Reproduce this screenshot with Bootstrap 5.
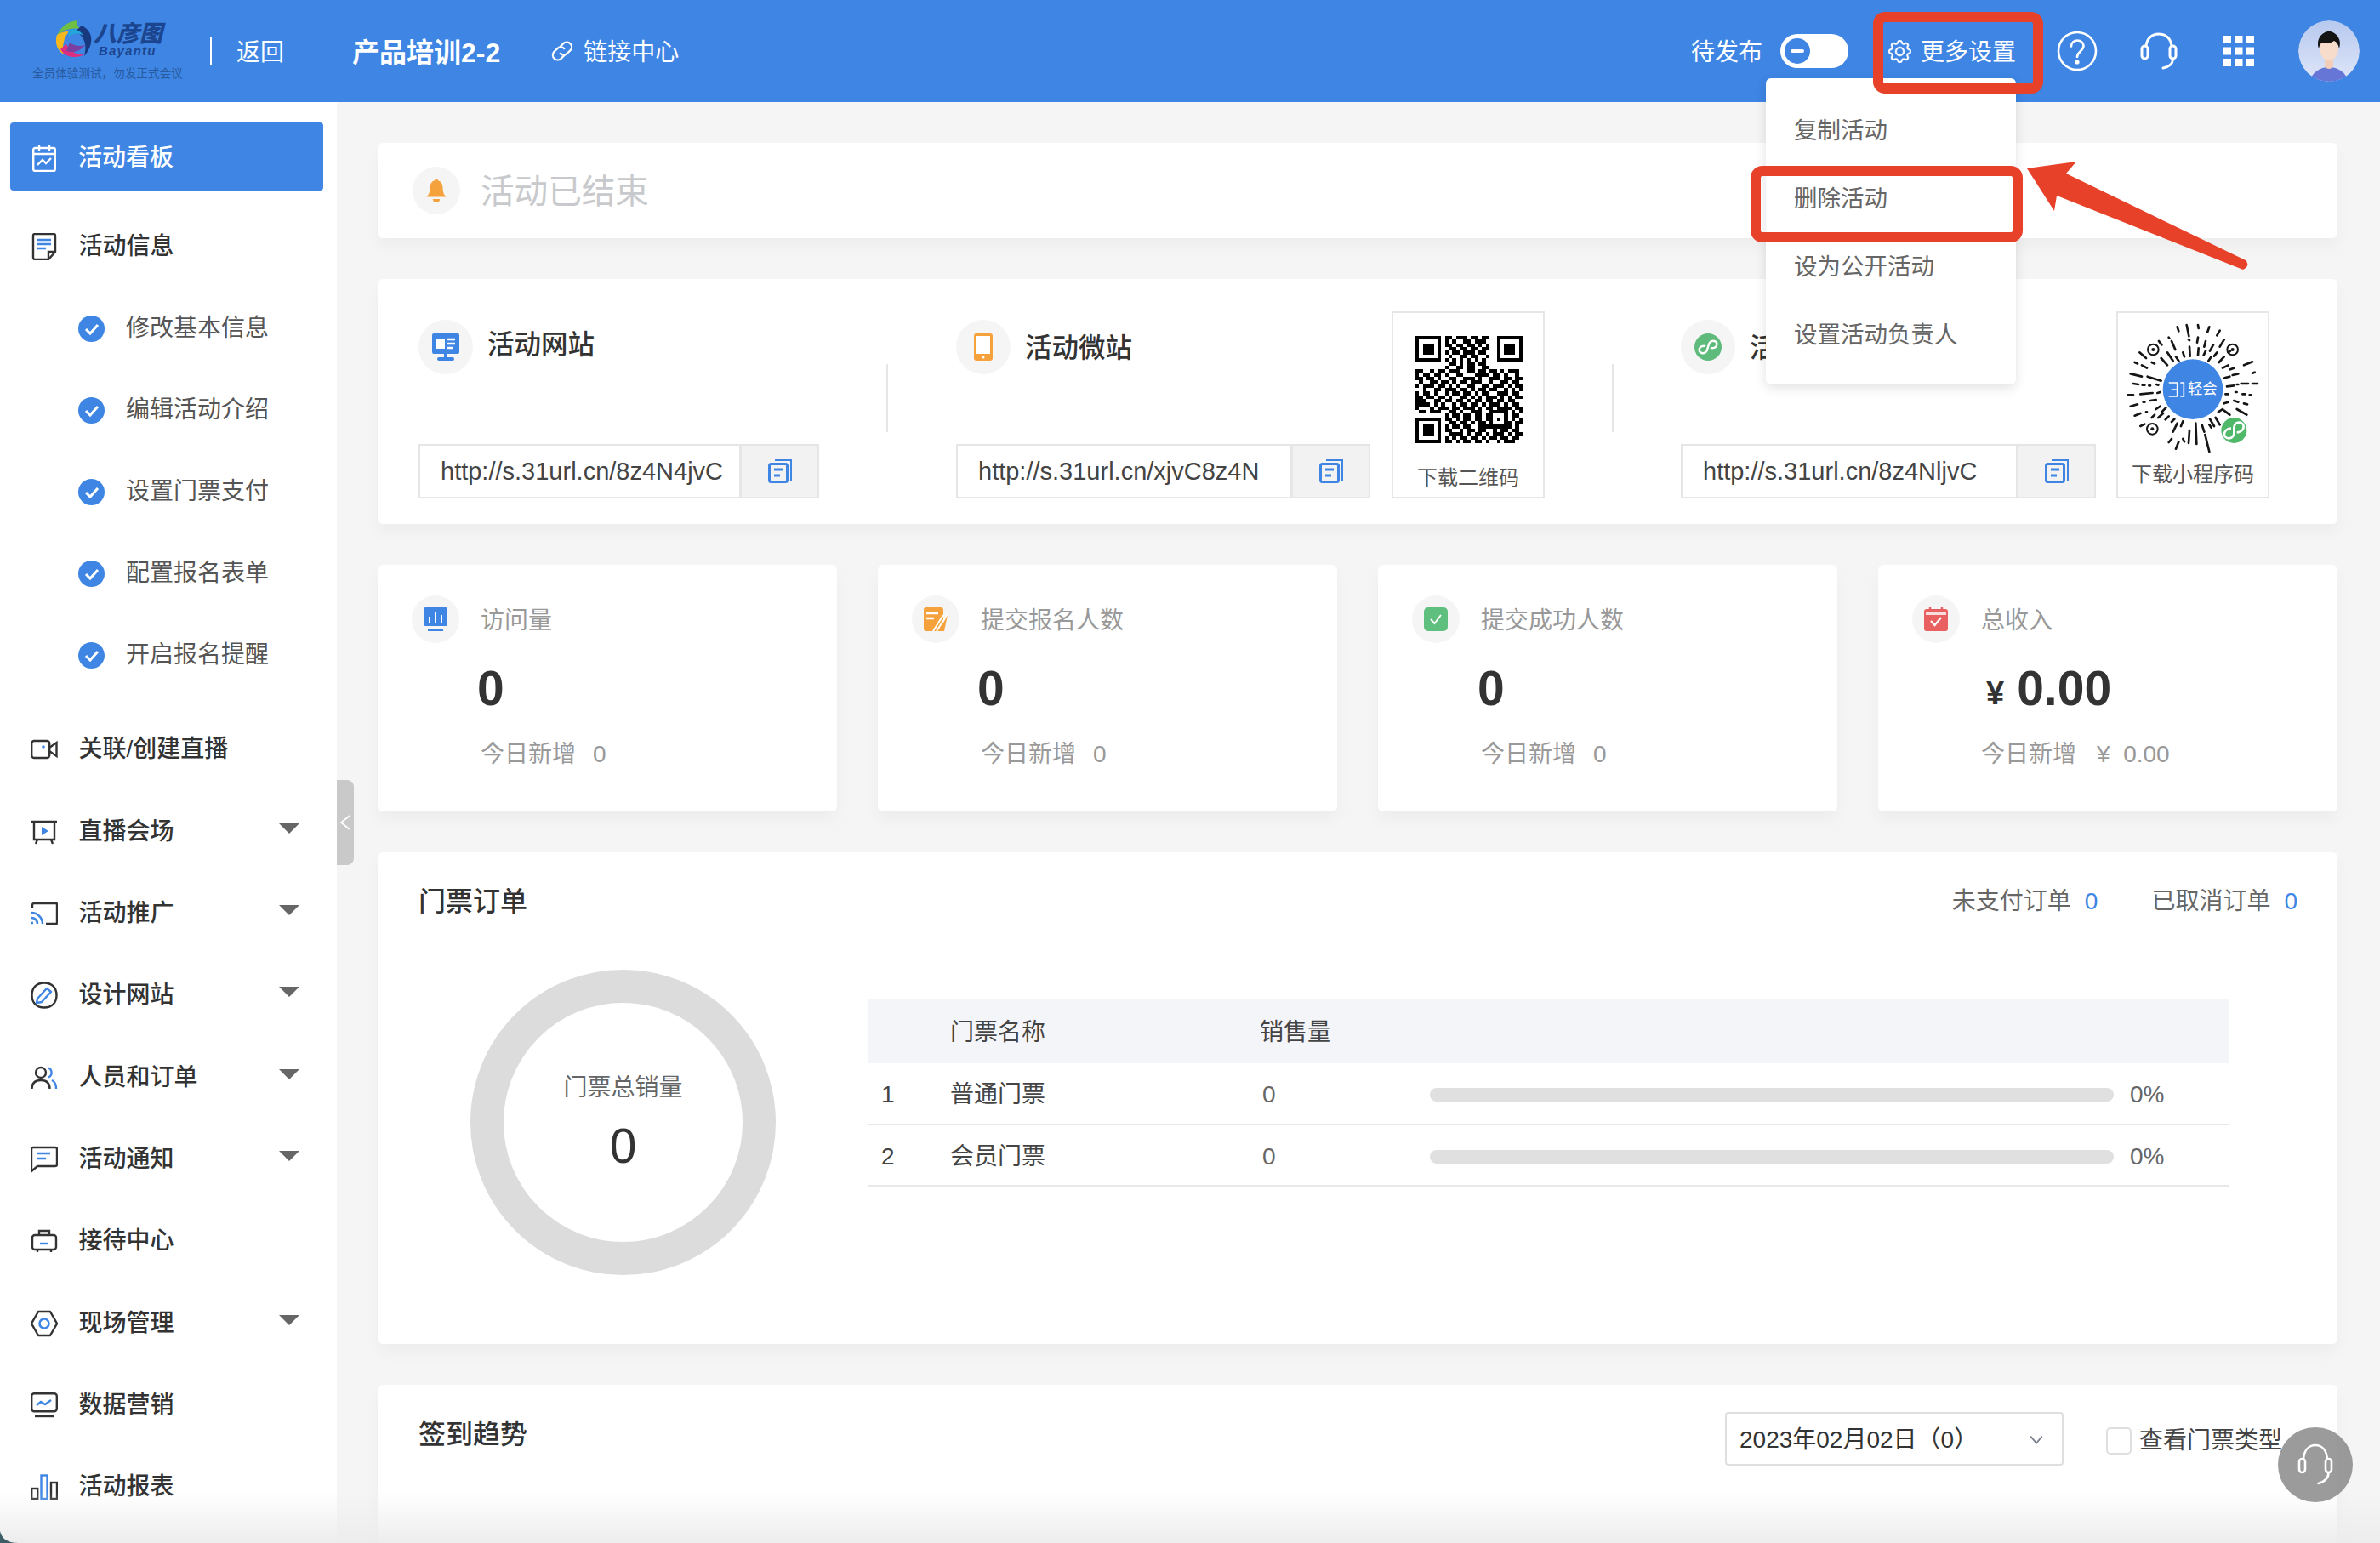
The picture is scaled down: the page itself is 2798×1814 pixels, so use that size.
<!DOCTYPE html>
<html lang="zh-CN">
<head>
<meta charset="utf-8">
<title>活动看板</title>
<link rel="stylesheet" href="https://cdn.jsdelivr.net/npm/bootstrap@5.3.0/dist/css/bootstrap.min.css">
<style>
html,body{margin:0;height:1814px;width:2798px;overflow:hidden}
body{font-family:"Liberation Sans","Noto Sans CJK SC",sans-serif;font-size:28px;color:#333;background:#f5f5f5}
.shell{position:relative;width:2798px;height:1814px;overflow:hidden}
.topbar{height:120px;background:#3e85e4;color:#fff;padding:0 24px 0 0;flex-wrap:nowrap;justify-content:flex-start}
.tx{padding-top:3px}
.logo-col{margin-left:38px;width:177px;line-height:1}
.logo-top{margin-left:28px;height:44px;width:125px}
.logo-txt{margin-left:-2px;font-style:italic;line-height:1}
.logo-cn{font-size:27px;font-weight:900;color:#1c4590;letter-spacing:0;line-height:26px;margin-top:3px}
.logo-en{font-size:15px;font-weight:700;color:#1c4590;letter-spacing:1.2px;margin-left:6px;line-height:14px}
.logo-cap{font-size:13.6px;color:#275a9f;margin-top:10px;white-space:nowrap;line-height:18px}
.bar-div{width:2px;height:32px;background:#fff;margin-left:32px;margin-right:29px}
.bar-title{font-size:32px;font-weight:700;margin-left:80px;white-space:nowrap}
.bar-link{margin-left:58px;gap:10px}
.bar-right{margin-left:auto}
.pill{width:80px;height:40px;background:#fff;border-radius:20px;margin:0 47px 0 21px;padding:2px}
.pill-dot{width:36px;height:36px;border-radius:50%;background:#3e85e4;border:3px solid #fff;box-shadow:0 0 0 1px #3e85e4 inset}
.pill-dash{width:16px;height:4px;background:#fff;border-radius:2px}
.gear-wrap{gap:11px;margin-right:48px}
.ic-q{margin-right:50px}.ic-h{margin-right:54px}.ic-g{margin-right:52px}
.ava{width:72px;height:72px;border-radius:50%;display:block}
.side{width:396px;flex:none;background:#fff;padding-top:24px}
.side-item{height:96.3px;padding:6px 0 0 36px;gap:24.5px;font-weight:500;color:#333;white-space:nowrap;text-decoration:none}
.side-item.is-on{height:80px;margin:0 16px 15px 12px;padding:3px 0 0 26px;gap:26px;background:#3e85e4;color:#fff;border-radius:4px}
.side-sub{height:96px;padding:6px 0 0 92px;gap:25px;color:#555;white-space:nowrap}
.side-gap{margin-top:15px}
.caret-d{width:0;height:0;border-left:12px solid transparent;border-right:12px solid transparent;border-top:12px solid #666;position:absolute;left:328px;margin-top:-8px}
.side-handle{position:absolute;left:396px;top:917px;width:20px;height:100px;background:#c9c9c9;border-radius:0 8px 8px 0;color:#fff}
.main{flex:1;padding:48px 50px 0 48px;gap:48px;min-width:0}
.pane{border:0;border-radius:6px;background:#fff;box-shadow:0 10px 18px rgba(0,0,0,.035)}
.bell-pane{height:112px;padding-left:41px;gap:24px;flex-direction:row;align-items:center}
.bell-txt{font-size:39.6px;color:#c8c9cc;padding-top:4px}
.dot56{width:56px;height:56px;border-radius:50%;background:#f5f5f5;flex:none}
.dot64{width:64px;height:64px;border-radius:50%;background:#f5f5f5;flex:none}
.links-pane{height:288px;padding:38px 0 30px 48px;flex-direction:row}
.lk-col{height:220px}
.lk-head{margin-top:10px;gap:17px;height:64px;font-size:31.5px;font-weight:500;white-space:nowrap}
.lk-head span{margin-top:-4px}
.lk-head.b2 span{margin-top:3px}
.lk-clip{width:20px;overflow:hidden}
.lk-sep{width:2px;height:80px;background:#e6e6e6;margin-top:62px;flex:none}
.lk-inp{margin-top:auto;height:64px;flex-wrap:nowrap}
.lk-inp .form-control{border:2px solid #e6e6e6;border-radius:0;height:64px;font-size:29px;color:#444;padding:0 0 0 24px;line-height:60px;white-space:nowrap;overflow:hidden}
.lk-inp .input-group-text{border:2px solid #e6e6e6;border-radius:0;background:#f2f2f2;width:93px;justify-content:center;padding:0}
.code-box{width:180px;height:220px;border:2px solid #e6e6e6;background:#fff;flex:none;margin-left:24px;text-align:center;font-size:24px;color:#555;white-space:nowrap}
.stat-row{--bs-gutter-x:48px;--bs-gutter-y:0}
.stat-pane{height:290px;padding:36px 0 0 40px}
.stat-head{gap:25px;color:#999;height:56px}
.stat-val{font-size:57px;font-weight:700;line-height:70px;margin:18px 0 0 77px;color:#333;white-space:nowrap}
.stat-val .yen{font-size:38px;margin:0 15px 0 10px;line-height:58px}
.stat-new{color:#999;margin:23px 0 0 81px;line-height:40px;white-space:nowrap;gap:20px}
.stat-new .yen-gap{margin-left:4px}
.order-pane{height:578px}
.sec-head{padding:38px 47px 0 48px;height:77px}
.sec-title{font-size:32px;font-weight:500;line-height:40px}
.sec-meta{color:#666;gap:63px;line-height:40px}
.blue-num{color:#3e85e4;margin-left:16px}
.order-body{flex:1}
.donut{width:359px;height:359px;border:39px solid #dcdcdc;border-radius:50%;margin:61px 0 0 109px;flex:none;padding-top:4px}
.donut-lbl{color:#666;line-height:34px}
.donut-num{font-size:57px;font-weight:500;line-height:70px;margin-top:16px;color:#333}
.tk-wrap{width:1600px;margin:95px 0 0 109px;flex:none}
.tk-table{table-layout:fixed;width:1600px;margin:0;--bs-table-bg:transparent;font-size:28px}
.tk-table th{background:#f4f5f9;font-weight:400;height:76px;padding:4px 0 0;vertical-align:middle;border:0;color:#444}
.tk-table td{height:72px;padding:3px 0 0;vertical-align:middle;border-bottom:2px solid #e8e8e8;color:#444}
.tk-table .tk-idx{padding-left:15px}
.tk-table .tk-num{color:#666;padding-left:3px}
.tk-bar{width:804px;height:16px;background:#e0e0e0;border-radius:8px;--bs-progress-bar-bg:#3e85e4}
.tk-pct{margin-left:19px;color:#666}
.sign-pane{flex:1;min-height:240px;padding:32px 65px 0 48px;flex-direction:row;align-items:flex-start;margin-bottom:-60px}
.sign-title{font-size:32px;font-weight:500;line-height:40px;margin-top:6px}
.sign-sel{width:398px;height:63px;border:2px solid #dfdfdf;border-radius:4px;font-size:28px;color:#333;padding:1px 0 0 15px;line-height:59px;background-image:url("data:image/svg+xml,%3csvg xmlns='http://www.w3.org/2000/svg' viewBox='0 0 16 16'%3e%3cpath fill='none' stroke='%237a7f8c' stroke-width='1.600' d='M2 5l6 7 6-7'/%3e%3c/svg%3e");background-size:18px;background-position:right 21px center;white-space:nowrap}
.sign-chk{gap:9px;margin-left:50px;margin-top:13px;color:#444;white-space:nowrap}
.sign-chk .form-check-input{width:30px;height:32px;margin:0;border:2px solid #dfdfdf;border-radius:5px;float:none}
.float-help{position:absolute;left:2678px;top:1678px;width:88px;height:88px;border-radius:50%;background:rgba(130,130,130,.8)}
.menu-pop{position:absolute;left:2076px;top:92px;width:294px;height:360px;padding:22px 0 18px;margin:0;border:0;border-radius:6px;background:#fff;box-shadow:0 4px 14px rgba(0,0,0,.12);display:block;min-width:0}
.menu-pop .dropdown-item{height:80px;line-height:80px;padding:0 0 0 33px;font-size:27.5px;color:#666}
.note-box{position:absolute;border:12px solid #e8412a;border-radius:14px;pointer-events:none;z-index:1001}
.note-a{left:2202px;top:14px;width:200px;height:96px}
.note-b{left:2058px;top:195px;width:320px;height:90px}
.note-arrow{position:absolute;left:2370px;top:180px;z-index:1001}
.fog{position:absolute;left:0;right:0;bottom:0;height:60px;background:linear-gradient(to bottom,rgba(236,236,236,0),rgba(236,236,236,.95));pointer-events:none}
.corner{position:absolute;left:0;bottom:0}
</style>
</head>
<body>
<div class="shell d-flex flex-column">

<nav class="navbar topbar d-flex align-items-center flex-shrink-0">
  <div class="logo-col">
    <div class="logo-top d-flex align-items-start">
      <svg width="46" height="44" viewBox="0 0 46 44">
        <path d="M25 0C14 1 4 8 1 19C7 12 16 8 28 10C25 7 24 3 25 0Z" fill="#6fbf44"/>
        <path d="M1 17C-2 26 1 35 9 40C7 32 8 22 15 13C9 13 4 15 1 17Z" fill="#f5b91e"/>
        <path d="M5 34C10 43 23 46 33 40C25 41 16 37 12 28C10 29 7 32 5 34Z" fill="#dc2f80"/>
        <path d="M12 36C20 39 29 36 34 29C28 31 21 30 16 26Z" fill="#7a3fa0"/>
        <path d="M30 6C43 12 46 27 33 42C36 31 35 20 23 13C25 10 28 8 30 6Z" fill="#18397f"/>
        <path d="M14 13C20 8 28 11 32 18C26 14 20 15 15 19Z" fill="#22a6dc"/>
      </svg>
      <div class="logo-txt"><div class="logo-cn">八彦图</div><div class="logo-en">Bayantu</div></div>
    </div>
    <div class="logo-cap">全员体验测试，勿发正式会议</div>
  </div>
  <div class="bar-div"></div>
  <span class="tx">返回</span>
  <span class="bar-title tx">产品培训2-2</span>
  <span class="bar-link d-flex align-items-center">
    <svg width="30" height="30" viewBox="0 0 26 26" fill="none" stroke="#fff" stroke-width="1.900" stroke-linecap="round"><path d="M11 8.500l3.600-3.600a5 5 0 0 1 7 7L18 15.500a5 5 0 0 1-7 0"/><path d="M15 17.500l-3.600 3.600a5 5 0 0 1-7-7L8 10.500a5 5 0 0 1 7 0"/></svg>
    <span class="tx">链接中心</span>
  </span>
  <div class="bar-right d-flex align-items-center">
    <span class="tx">待发布</span>
    <div class="pill"><div class="pill-dot d-flex align-items-center justify-content-center"><div class="pill-dash"></div></div></div>
    <div class="gear-wrap d-flex align-items-center">
      <svg width="27" height="27" viewBox="0 0 16 16" fill="#fff" stroke="#fff" stroke-width=".3"><path d="M8 4.754a3.246 3.246 0 1 0 0 6.492 3.246 3.246 0 0 0 0-6.492zM5.754 8a2.246 2.246 0 1 1 4.492 0 2.246 2.246 0 0 1-4.492 0z"/><path d="M9.796 1.343c-.527-1.790-3.065-1.790-3.592 0l-.094.319a.873.873 0 0 1-1.255.52l-.292-.16c-1.640-.892-3.433.902-2.540 2.541l.159.292a.873.873 0 0 1-.52 1.255l-.319.094c-1.790.527-1.790 3.065 0 3.592l.319.094a.873.873 0 0 1 .52 1.255l-.16.292c-.892 1.640.901 3.434 2.541 2.540l.292-.159a.873.873 0 0 1 1.255.52l.094.319c.527 1.790 3.065 1.790 3.592 0l.094-.319a.873.873 0 0 1 1.255-.52l.292.16c1.640.893 3.434-.902 2.540-2.541l-.159-.292a.873.873 0 0 1 .52-1.255l.319-.094c1.790-.527 1.790-3.065 0-3.592l-.319-.094a.873.873 0 0 1-.52-1.255l.16-.292c.893-1.640-.902-3.433-2.541-2.540l-.292.159a.873.873 0 0 1-1.255-.52l-.094-.319zm-2.633.283c.246-.835 1.428-.835 1.674 0l.094.319a1.873 1.873 0 0 0 2.693 1.115l.291-.16c.764-.415 1.600.42 1.184 1.185l-.159.292a1.873 1.873 0 0 0 1.116 2.692l.318.094c.835.246.835 1.428 0 1.674l-.319.094a1.873 1.873 0 0 0-1.115 2.693l.16.291c.415.764-.42 1.600-1.185 1.184l-.291-.159a1.873 1.873 0 0 0-2.693 1.116l-.094.318c-.246.835-1.428.835-1.674 0l-.094-.319a1.873 1.873 0 0 0-2.692-1.115l-.292.16c-.764.415-1.600-.42-1.184-1.185l.159-.291A1.873 1.873 0 0 0 1.945 8.930l-.319-.094c-.835-.246-.835-1.428 0-1.674l.319-.094A1.873 1.873 0 0 0 3.060 4.377l-.16-.292c-.415-.764.42-1.600 1.185-1.184l.292.159a1.873 1.873 0 0 0 2.692-1.115l.094-.319z"/></svg>
      <span class="tx">更多设置</span>
    </div>
    <svg class="ic-q" width="48" height="48" viewBox="0 0 48 48" fill="none" stroke="#fff" stroke-width="2.600" stroke-linecap="round"><circle cx="24" cy="24" r="22"/><path d="M17 18.500c0-4.200 3.200-7 7.200-7 4.200 0 7.300 2.800 7.300 6.500 0 6-7.500 6.500-7.500 13"/><circle cx="24" cy="37" r="1.300" fill="#fff"/></svg>
    <svg class="ic-h" width="44" height="44" viewBox="0 0 44 44" fill="none" stroke="#fff" stroke-width="3" stroke-linecap="round"><path d="M7 16C8 7 14 2 22 2s14 5 15 14"/><rect x="2" y="16" width="7" height="15" rx="3.500"/><rect x="35" y="16" width="7" height="15" rx="3.500"/><path d="M38.500 31c0 6-5 10-11.500 11"/></svg>
    <svg class="ic-g" width="36" height="36" viewBox="0 0 36 36" fill="#fff"><rect width="9" height="9"/><rect x="13.500" width="9" height="9"/><rect x="27" width="9" height="9"/><rect y="13.500" width="9" height="9"/><rect x="13.500" y="13.500" width="9" height="9"/><rect x="27" y="13.500" width="9" height="9"/><rect y="27" width="9" height="9"/><rect x="13.500" y="27" width="9" height="9"/><rect x="27" y="27" width="9" height="9"/></svg>
    <svg class="ava" viewBox="0 0 72 72"><defs><clipPath id="avc"><circle cx="36" cy="36" r="36"/></clipPath><linearGradient id="avg" x1="0" y1="0" x2="0" y2="1"><stop offset="0" stop-color="#b7c9ef"/><stop offset="1" stop-color="#dfe6f8"/></linearGradient></defs><g clip-path="url(#avc)"><rect width="72" height="72" fill="url(#avg)"/><path d="M14 72c1-11 12-17 22-17s21 6 22 17z" fill="#6676d6"/><path d="M31 42h10v12c-2 4-8 4-10 0z" fill="#f3cdb8"/><ellipse cx="36" cy="33" rx="11" ry="14" fill="#f8dccb"/><path d="M24 33c-4-12 5-20 12-20s16 8 12 20c-1-5-3-8-6-9-4 3-10 4-14 2-2 1-3 3-4 7z" fill="#141414"/></g></svg>
  </div>
</nav>

<div class="d-flex flex-grow-1" style="min-height:0">
  <aside class="side d-flex flex-column">
    <a class="side-item is-on d-flex align-items-center" href="#">
      <svg width="28" height="32" viewBox="0 0 28 32" fill="none" stroke="#fff" stroke-width="2.400"><rect x="1.200" y="4" width="25.600" height="27" rx="2"/><path d="M1.200 11h25.600M8 0v7M20 0v7"/><path d="M6 24l6-6 4 4 6-6"/></svg>
      活动看板
    </a>
    <div class="side-item d-flex align-items-center">
      <svg width="32" height="32" viewBox="0 0 28 32" fill="none"><path d="M3 1h22a2 2 0 0 1 2 2v19l-8 9H3a2 2 0 0 1-2-2V3a2 2 0 0 1 2-2z" stroke="#333" stroke-width="2.400"/><path d="M6 8h16M6 13h16M6 18h10" stroke="#3e85e4" stroke-width="2.400"/><path d="M27 22h-8v9" stroke="#333" stroke-width="2.400"/></svg>
      活动信息
    </div>
    <div class="side-sub d-flex align-items-center"><svg width="31" height="31" viewBox="0 0 31 31"><circle cx="15.500" cy="15.500" r="15.500" fill="#3e85e4"/><path d="M9 16l5 5 9-10" fill="none" stroke="#fff" stroke-width="3"/></svg>修改基本信息</div>
    <div class="side-sub d-flex align-items-center"><svg width="31" height="31" viewBox="0 0 31 31"><circle cx="15.500" cy="15.500" r="15.500" fill="#3e85e4"/><path d="M9 16l5 5 9-10" fill="none" stroke="#fff" stroke-width="3"/></svg>编辑活动介绍</div>
    <div class="side-sub d-flex align-items-center"><svg width="31" height="31" viewBox="0 0 31 31"><circle cx="15.500" cy="15.500" r="15.500" fill="#3e85e4"/><path d="M9 16l5 5 9-10" fill="none" stroke="#fff" stroke-width="3"/></svg>设置门票支付</div>
    <div class="side-sub d-flex align-items-center"><svg width="31" height="31" viewBox="0 0 31 31"><circle cx="15.500" cy="15.500" r="15.500" fill="#3e85e4"/><path d="M9 16l5 5 9-10" fill="none" stroke="#fff" stroke-width="3"/></svg>配置报名表单</div>
    <div class="side-sub d-flex align-items-center"><svg width="31" height="31" viewBox="0 0 31 31"><circle cx="15.500" cy="15.500" r="15.500" fill="#3e85e4"/><path d="M9 16l5 5 9-10" fill="none" stroke="#fff" stroke-width="3"/></svg>开启报名提醒</div>
    <div class="side-item side-gap d-flex align-items-center">
      <svg width="32" height="24" viewBox="0 0 32 24" fill="none" stroke="#333" stroke-width="2.400"><rect x="1.200" y="2" width="21" height="20" rx="3"/><path d="M22 10l8.500-6v16L22 14"/><circle cx="15" cy="9" r="1.800" fill="#3e85e4" stroke="none"/></svg>
      关联/创建直播
    </div>
    <div class="side-item d-flex align-items-center">
      <svg width="32" height="30" viewBox="0 0 32 30" fill="none" stroke="#333" stroke-width="2.400"><path d="M1 3h30M4 3v21h24V3M8 24l-2 5M24 24l2 5"/><path d="M13 9l8 5-8 5z" fill="#3e85e4" stroke="none"/></svg>
      直播会场<span class="caret-d"></span>
    </div>
    <div class="side-item d-flex align-items-center">
      <svg width="32" height="28" viewBox="0 0 32 28" fill="none"><path d="M2 8V4a2 2 0 0 1 2-2h26a1 1 0 0 1 1 1v22a1 1 0 0 1-1 1H18" stroke="#333" stroke-width="2.400"/><path d="M1 13c7 0 13 6 13 13M1 19c4 0 7 3 7 7M1 25h2" stroke="#3e85e4" stroke-width="2.600"/></svg>
      活动推广<span class="caret-d"></span>
    </div>
    <div class="side-item d-flex align-items-center">
      <svg width="32" height="32" viewBox="0 0 32 32" fill="none"><path d="M16 1.500c9 0 14.500 5.500 14.500 14.500 0 9-5.500 14.500-14.500 14.500S1.500 25 1.500 16 7 1.500 16 1.500z" stroke="#333" stroke-width="2.400"/><path d="M8 20l11-12 5 4-11 12-6 1z" stroke="#3e85e4" stroke-width="2.400" stroke-linejoin="round"/></svg>
      设计网站<span class="caret-d"></span>
    </div>
    <div class="side-item d-flex align-items-center">
      <svg width="32" height="28" viewBox="0 0 32 28" fill="none"><circle cx="12" cy="8" r="6" stroke="#333" stroke-width="2.400"/><path d="M1.500 27c0-7 4-10 10.500-10s10.500 3 10.500 10" stroke="#333" stroke-width="2.400"/><path d="M21 2.500a6 6 0 0 1 0 11M25 17c3 1.500 5 4.500 5 10" stroke="#3e85e4" stroke-width="2.400"/></svg>
      人员和订单<span class="caret-d"></span>
    </div>
    <div class="side-item d-flex align-items-center">
      <svg width="32" height="32" viewBox="0 0 32 32" fill="none"><path d="M3 2h26a2 2 0 0 1 2 2v18a2 2 0 0 1-2 2H8l-7 6V4a2 2 0 0 1 2-2z" stroke="#333" stroke-width="2.400"/><path d="M8 9h15M8 15h10" stroke="#3e85e4" stroke-width="2.400"/></svg>
      活动通知<span class="caret-d"></span>
    </div>
    <div class="side-item d-flex align-items-center">
      <svg width="32" height="28" viewBox="0 0 32 28" fill="none"><rect x="2" y="7" width="28" height="17" rx="3" stroke="#333" stroke-width="2.400"/><path d="M10 7V2h12v5M8 24v3M24 24v3" stroke="#333" stroke-width="2.400"/><path d="M11 17h10" stroke="#3e85e4" stroke-width="2.400"/></svg>
      接待中心
    </div>
    <div class="side-item d-flex align-items-center">
      <svg width="32" height="32" viewBox="0 0 32 32" fill="none"><path d="M9 2h14l8 14-8 14H9L1 16z" stroke="#333" stroke-width="2.400" stroke-linejoin="round"/><circle cx="16" cy="16" r="5.500" stroke="#3e85e4" stroke-width="2.600"/></svg>
      现场管理<span class="caret-d"></span>
    </div>
    <div class="side-item d-flex align-items-center">
      <svg width="32" height="30" viewBox="0 0 32 30" fill="none"><rect x="1.200" y="1.200" width="29.600" height="21" rx="3" stroke="#333" stroke-width="2.400"/><path d="M5 28h22" stroke="#333" stroke-width="2.400"/><path d="M7 15l5-4 5 3 7-5" stroke="#3e85e4" stroke-width="2.400"/></svg>
      数据营销
    </div>
    <div class="side-item d-flex align-items-center">
      <svg width="32" height="30" viewBox="0 0 32 30" fill="none"><rect x="1.200" y="17" width="7" height="12" stroke="#333" stroke-width="2.400"/><rect x="12.500" y="1.500" width="7" height="27.500" stroke="#3e85e4" stroke-width="2.400"/><rect x="24" y="10" width="7" height="19" stroke="#333" stroke-width="2.400"/></svg>
      活动报表
    </div>
  </aside>
  <div class="side-handle d-flex align-items-center justify-content-center">
    <svg width="12" height="18" viewBox="0 0 12 18" fill="none" stroke="#fff" stroke-width="1.800"><path d="M11 1L1 9l10 8"/></svg>
  </div>

  <main class="main d-flex flex-column">
    <div class="card pane bell-pane">
      <div class="dot56 d-flex align-items-center justify-content-center">
        <svg width="24" height="28" viewBox="0 0 24 28" fill="#f5a13c"><circle cx="12" cy="2.500" r="2"/><path d="M12 2c5 0 7.500 4 7.500 9 0 5 1.500 8 4 10.500H.5C3 19 4.500 16 4.500 11 4.500 6 7 2 12 2z"/><path d="M8 24h8a4 4 0 0 1-8 0z"/></svg>
      </div>
      <span class="bell-txt">活动已结束</span>
    </div>

    <div class="card pane links-pane">
      <div class="lk-col d-flex flex-column" style="width:471px;flex:none">
        <div class="lk-head d-flex align-items-center">
          <div class="dot64 d-flex align-items-center justify-content-center">
            <svg width="32" height="32" viewBox="0 0 32 32"><rect width="32" height="24" rx="2" fill="#3e85e4"/><rect x="14" y="24" width="4" height="4" fill="#3e85e4"/><rect x="6" y="28" width="20" height="4" rx="2" fill="#3e85e4"/><rect x="5" y="6" width="10" height="12" fill="#fff"/><path d="M18 7h9M18 12h9M18 17h6" stroke="#fff" stroke-width="2.400"/></svg>
          </div>
          <span>活动网站</span>
        </div>
        <div class="input-group lk-inp">
          <div class="form-control">http://s.31url.cn/8z4N4jvC</div>
          <span class="input-group-text"><svg width="28" height="28" viewBox="0 0 28 28" fill="none"><path d="M8 1h19v24" stroke="#3e85e4" stroke-width="2"/><rect x="1.500" y="5.500" width="21" height="21" rx="2" stroke="#3e85e4" stroke-width="3"/><path d="M7 12h10M7 19h7" stroke="#3e85e4" stroke-width="3"/></svg></span>
        </div>
      </div>
      <div class="lk-sep" style="margin-left:79px;margin-right:80px"></div>
      <div class="lk-col d-flex flex-column" style="width:487px;flex:none">
        <div class="lk-head b2 d-flex align-items-center">
          <div class="dot64 d-flex align-items-center justify-content-center">
            <svg width="22" height="32" viewBox="0 0 22 32"><rect width="22" height="32" rx="3" fill="#f5a13c"/><rect x="3" y="3" width="16" height="21" fill="#fff"/><circle cx="11" cy="28" r="1.500" fill="#fff"/></svg>
          </div>
          <span>活动微站</span>
        </div>
        <div class="input-group lk-inp">
          <div class="form-control">http://s.31url.cn/xjvC8z4N</div>
          <span class="input-group-text"><svg width="28" height="28" viewBox="0 0 28 28" fill="none"><path d="M8 1h19v24" stroke="#3e85e4" stroke-width="2"/><rect x="1.500" y="5.500" width="21" height="21" rx="2" stroke="#3e85e4" stroke-width="3"/><path d="M7 12h10M7 19h7" stroke="#3e85e4" stroke-width="3"/></svg></span>
        </div>
      </div>
      <div class="code-box d-flex flex-column align-items-center" style="margin-left:25px">
        <svg id="qr" width="126" height="126" viewBox="0 0 29 29" shape-rendering="crispEdges" style="margin:27px 0 0 2px"></svg>
        <div style="line-height:34px;margin-top:24px">下载二维码</div>
      </div>
      <div class="lk-sep" style="margin-left:79px;margin-right:79px"></div>
      <div class="lk-col d-flex flex-column" style="width:488px;flex:none">
        <div class="lk-head b2 d-flex align-items-center">
          <div class="dot64 d-flex align-items-center justify-content-center">
            <svg width="32" height="32" viewBox="0 0 32 32"><circle cx="16" cy="16" r="16" fill="#5fbb7b"/><path d="M16 11c1-3 3-4 5-4 3 0 4 2 4 4 0 3-3 5-6 5M16 21c-1 3-3 4-5 4-3 0-4-2-4-4 0-3 3-5 6-5M16 11v10" fill="none" stroke="#fff" stroke-width="2.400" transform="rotate(18 16 16)"/></svg>
          </div>
          <span class="lk-clip">活动小程序</span>
        </div>
        <div class="input-group lk-inp">
          <div class="form-control">http://s.31url.cn/8z4NljvC</div>
          <span class="input-group-text"><svg width="28" height="28" viewBox="0 0 28 28" fill="none"><path d="M8 1h19v24" stroke="#3e85e4" stroke-width="2"/><rect x="1.500" y="5.500" width="21" height="21" rx="2" stroke="#3e85e4" stroke-width="3"/><path d="M7 12h10M7 19h7" stroke="#3e85e4" stroke-width="3"/></svg></span>
        </div>
      </div>
      <div class="code-box d-flex flex-column align-items-center">
        <svg width="160" height="160" viewBox="0 0 480 480" style="margin-top:8px;flex:none" aria-label="小程序码">
          <path fill="none" stroke="#151515" stroke-width="8" stroke-linecap="round" d="M185 25L190 40M218 18L226 58M258 18L260 30M298 25L292 42M335 38L325 55M258 62L255 80M285 75L280 95M312 88L300 110M350 70L335 95M165 75L178 105M155 62L157 65M225 70L228 72M228 95L230 128M260 100L258 125M205 115L210 130M150 115L170 145M180 130L190 145M128 135L150 160M285 110L278 125M305 130L295 145M325 115L315 128M350 130L332 150M365 115L372 110M120 75L130 88M52 115L75 135M35 150L45 155M60 160L78 170M95 150L105 155M20 190L60 200M80 200L128 215M458 185L450 188M420 160L450 148M345 170L365 160M385 170L372 175M30 225L48 228M62 230L70 230M85 232L90 232M112 228L118 230M12 265L30 265M55 262L98 258M115 258L125 255M20 305L45 298M65 290L70 290M90 285L110 282M35 338L55 330M75 325L78 325M110 315L125 305M145 310L130 325M95 345L105 335M55 375L70 368M118 345L135 330M155 340L143 352M155 432L165 420M185 365L170 395M205 358L198 375M175 350L165 360M228 390L225 435M250 365L253 438M283 405L298 465M272 370L280 395M298 370L305 380M320 345L335 370M300 350L315 375M345 315L330 325M350 320L370 335M395 315L430 335M385 285L400 290M420 295L432 298M350 295L365 290M360 235L385 232M395 228L400 228M410 225L435 225M450 225L468 225M352 205L370 200M380 195L400 190M355 262L365 262M390 255L395 255M415 262L425 262M440 265L445 265M205 420L210 430M180 455L190 430"/>
          <g fill="none" stroke="#151515"><circle cx="100" cy="105" r="19" stroke-width="6"/><circle cx="380" cy="105" r="19" stroke-width="6"/><circle cx="97" cy="385" r="19" stroke-width="6"/></g>
          <g fill="#151515"><circle cx="100" cy="105" r="6"/><circle cx="380" cy="105" r="6"/><circle cx="97" cy="385" r="6"/></g>
          <circle cx="240" cy="245" r="106" fill="#3e85e4"/>
          <g fill="none" stroke="#fff" stroke-width="5"><path d="M155 222h30v48h-30M164 246h21M196 222h12v48h-12"/></g>
          <text x="222" y="262" fill="#fff" font-size="52" font-family="Noto Sans CJK SC">轻会</text>
          <circle cx="385" cy="390" r="45" fill="#4fb869"/>
          <path d="M385 378c3-12 10-16 18-16 11 0 16 8 16 15 0 12-12 20-24 20M385 402c-3 12-10 16-18 16-11 0-16-8-16-15 0-12 12-20 24-20M385 378v24" fill="none" stroke="#fff" stroke-width="8"/>
        </svg>
        <div style="line-height:34px;margin-top:5px">下载小程序码</div>
      </div>
    </div>

    <div class="row stat-row">
      <div class="col-3"><div class="card pane stat-pane">
        <div class="stat-head d-flex align-items-center"><div class="dot56 d-flex align-items-center justify-content-center">
          <svg width="28" height="28" viewBox="0 0 28 28"><rect width="28" height="22" rx="2" fill="#3e85e4"/><path d="M7 11v7M14 5v13M21 9v9" stroke="#fff" stroke-width="2"/><rect x="5" y="25" width="18" height="3" fill="#3e85e4"/></svg>
        </div><span class="tx">访问量</span></div>
        <div class="stat-val">0</div>
        <div class="stat-new d-flex"><span>今日新增</span><span>0</span></div>
      </div></div>
      <div class="col-3"><div class="card pane stat-pane">
        <div class="stat-head d-flex align-items-center"><div class="dot56 d-flex align-items-center justify-content-center">
          <svg width="28" height="28" viewBox="0 0 28 28"><path d="M3 0h17a3 3 0 0 1 3 3v25H3a3 3 0 0 1-3-3V3a3 3 0 0 1 3-3z" fill="#f5a13c"/><path d="M3 7h14M3 13h9" stroke="#fff" stroke-width="2.400"/><path d="M28 8L15 28M23 9L11 28" stroke="#fff" stroke-width="2"/><path d="M28 9L18 28h6z" fill="#f5a13c"/></svg>
        </div><span class="tx">提交报名人数</span></div>
        <div class="stat-val">0</div>
        <div class="stat-new d-flex"><span>今日新增</span><span>0</span></div>
      </div></div>
      <div class="col-3"><div class="card pane stat-pane">
        <div class="stat-head d-flex align-items-center"><div class="dot56 d-flex align-items-center justify-content-center">
          <svg width="28" height="28" viewBox="0 0 28 28"><rect width="28" height="28" rx="5" fill="#5fbf7f"/><path d="M8 14l4.500 5L20 9" fill="none" stroke="#fff" stroke-width="2"/></svg>
        </div><span class="tx">提交成功人数</span></div>
        <div class="stat-val">0</div>
        <div class="stat-new d-flex"><span>今日新增</span><span>0</span></div>
      </div></div>
      <div class="col-3"><div class="card pane stat-pane">
        <div class="stat-head d-flex align-items-center"><div class="dot56 d-flex align-items-center justify-content-center">
          <svg width="28" height="28" viewBox="0 0 28 28"><rect y="2" width="28" height="26" rx="3" fill="#e96060"/><rect x="2" y="6" width="24" height="3" fill="#fbdcdc"/><path d="M7 0v5M21 0v5" stroke="#e96060" stroke-width="2.500"/><path d="M8 16l4.500 5L20 12" fill="none" stroke="#fff" stroke-width="2.200"/></svg>
        </div><span class="tx">总收入</span></div>
        <div class="stat-val d-flex align-items-end"><span class="yen">¥</span><span>0.00</span></div>
        <div class="stat-new d-flex"><span>今日新增</span><span class="yen-gap">¥&nbsp;&nbsp;0.00</span></div>
      </div></div>
    </div>

    <div class="card pane order-pane">
      <div class="sec-head d-flex justify-content-between align-items-start">
        <span class="sec-title">门票订单</span>
        <div class="sec-meta d-flex">
          <span>未支付订单<span class="blue-num">0</span></span>
          <span>已取消订单<span class="blue-num">0</span></span>
        </div>
      </div>
      <div class="order-body d-flex align-items-start">
        <div class="donut d-flex flex-column align-items-center justify-content-center">
          <div class="donut-lbl">门票总销量</div>
          <div class="donut-num">0</div>
        </div>
        <div class="tk-wrap">
          <table class="table tk-table">
            <colgroup><col style="width:96px"><col style="width:364px"><col style="width:200px"><col></colgroup>
            <thead><tr><th></th><th>门票名称</th><th>销售量</th><th></th></tr></thead>
            <tbody>
              <tr><td class="tk-idx">1</td><td>普通门票</td><td class="tk-num">0</td><td><div class="d-flex align-items-center"><div class="progress tk-bar"><div class="progress-bar" style="width:0%"></div></div><span class="tk-pct">0%</span></div></td></tr>
              <tr><td class="tk-idx">2</td><td>会员门票</td><td class="tk-num">0</td><td><div class="d-flex align-items-center"><div class="progress tk-bar"><div class="progress-bar" style="width:0%"></div></div><span class="tk-pct">0%</span></div></td></tr>
            </tbody>
          </table>
        </div>
      </div>
    </div>

    <div class="card pane sign-pane">
      <span class="sign-title me-auto">签到趋势</span>
      <div class="form-select sign-sel">2023年02月02日（0）</div>
      <label class="sign-chk d-flex align-items-center"><input class="form-check-input" type="checkbox"><span>查看门票类型</span></label>
    </div>
  </main>
</div>

<div class="fog"></div>
<svg class="corner" width="22" height="14" viewBox="0 0 22 14"><path d="M0 0Q3 14 22 14H0Z" fill="#3c5c66"/></svg>

<div class="float-help d-flex align-items-center justify-content-center">
  <svg width="44" height="50" viewBox="0 0 44 50" fill="none" stroke="#fff" stroke-width="2.600" stroke-linecap="round"><path d="M8 18C9 8 14 2 22 2s13 6 14 16"/><rect x="3" y="18" width="7" height="16" rx="3.500"/><rect x="34" y="18" width="7" height="16" rx="3.500"/><path d="M37.500 34c0 7-5 11-12 13"/></svg>
</div>

<ul class="dropdown-menu menu-pop list-unstyled">
  <li><a class="dropdown-item" href="#">复制活动</a></li>
  <li><a class="dropdown-item" href="#">删除活动</a></li>
  <li><a class="dropdown-item" href="#">设为公开活动</a></li>
  <li><a class="dropdown-item" href="#">设置活动负责人</a></li>
</ul>
<div class="note-box note-a"></div>
<div class="note-box note-b"></div>
<svg class="note-arrow" width="290" height="150" viewBox="2370 180 290 150"><path d="M2383 198L2441 190L2429 204L2640 306Q2646 312 2637 317L2418 230L2415 248Z" fill="#e8412a"/></svg>
</div>

<script>
(function(){
var rows=["00000000110111011011000000000","00000000101001101110000000000","00000000110110110101000000000","00000000011011011011000000000","00000000101101110110000000000","00000000010011011001000000000","00000000101010101010000000000","00000000011010110110000000000","00000000100110110011000000000","11001011011100110110110101110","10110110100110001111011010010","11011010011001110100111011011","01001101101011011100100110110","10111011010100110011011101011","00100110111011010110110010101","10110100101101101011001110110","11011011010011010101110101011","11100110110110101101101101100","11110101001011011010111010110","10001011101101110101101111011","01101110011010011100110110101","00000000101101101101100010110","00000000110101101101101010101","00000000011011010110100011011","00000000101101100111111111010","00000000110010110110010110110","00000000011110101101011101011","00000000101011011010110110110","00000000110101101101001011100"];
var m=rows.map(function(r){return r.split("").map(Number)});
function f(x,y){for(var j=0;j<7;j++)for(var i=0;i<7;i++){m[y+j][x+i]=(i==0||j==0||i==6||j==6||(i>1&&i<5&&j>1&&j<5))?1:0}}
f(0,0);f(22,0);f(0,22);
for(var y=0;y<8;y++){m[y][7]=0;m[y][21]=0}
for(var x=0;x<8;x++){m[7][x]=0;m[7][28-x]=0}
for(var j=0;j<5;j++)for(var i=0;i<5;i++){m[20+j][20+i]=(i==0||j==0||i==4||j==4||(i==2&&j==2))?1:0}
var d="";for(var y=0;y<29;y++)for(var x=0;x<29;x++){if(m[y][x])d+="M"+x+" "+y+"h1v1h-1z"}
var p=document.createElementNS("http://www.w3.org/2000/svg","path");p.setAttribute("d",d);p.setAttribute("fill","#000");document.getElementById("qr").appendChild(p);
})();
</script>
<script src="https://cdn.jsdelivr.net/npm/bootstrap@5.3.0/dist/js/bootstrap.bundle.min.js"></script>
</body>
</html>
